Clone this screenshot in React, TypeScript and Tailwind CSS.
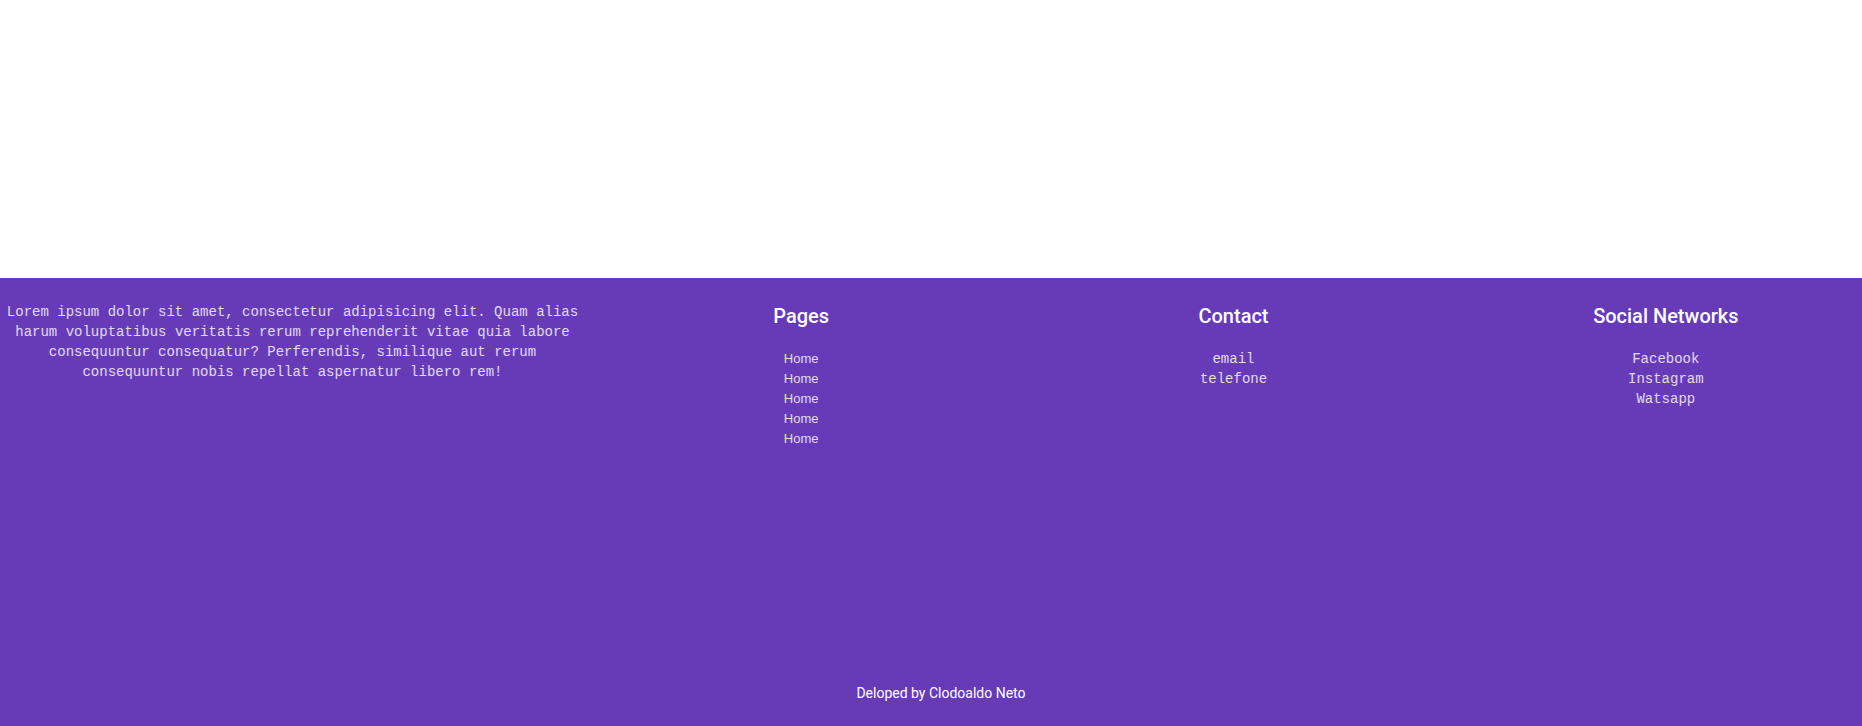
import React from 'react';

const pages = ['Home', 'Home', 'Home', 'Home', 'Home'];
const contacts = ['email', 'telefone'];
const socials = ['Facebook', 'Instagram', 'Watsapp'];

const mono = "font-['Liberation_Mono',monospace]";

const FooterColumn: React.FC<{ title: string; items: string[]; sans?: boolean }> = ({ title, items, sans }) => (
  <div className="flex-1 flex flex-col items-center text-center">
    <h3 className="font-['Roboto',sans-serif] text-xl font-medium text-white mb-[19px]">{title}</h3>
    <ul className="flex flex-col items-center">
      {items.map((item, i) => (
        <li
          key={i}
          className={
            sans
              ? "font-['Liberation_Sans',Arial,sans-serif] text-[13px] leading-5 text-white/80"
              : `${mono} text-[14px] leading-5 text-white/80`
          }
        >
          {item}
        </li>
      ))}
    </ul>
  </div>
);

export default function App() {
  return (
    <div className="w-full overflow-hidden bg-white">
      {/* empty page body */}
      <div className="h-[278px] bg-white" />

      {/* Footer */}
      <footer className="w-[1882px] h-[448px] bg-[#673ab7] flex flex-col">
        <div className="flex pt-[24px]">
          <div className="w-[585px]">
            <p className={`${mono} text-center text-[14px] leading-5 text-white/80`}>
              Lorem ipsum dolor sit amet, consectetur adipisicing elit. Quam alias harum voluptatibus veritatis rerum
              reprehenderit vitae quia labore consequuntur consequatur? Perferendis, similique aut rerum consequuntur
              nobis repellat aspernatur libero rem!
            </p>
          </div>
          <FooterColumn title="Pages" items={pages} sans />
          <FooterColumn title="Contact" items={contacts} />
          <FooterColumn title="Social Networks" items={socials} />
        </div>
        <div className="mt-auto pb-[23px] text-center font-['Roboto',sans-serif] text-sm leading-5 text-white">
          Deloped by Clodoaldo Neto
        </div>
      </footer>
    </div>
  );
}
